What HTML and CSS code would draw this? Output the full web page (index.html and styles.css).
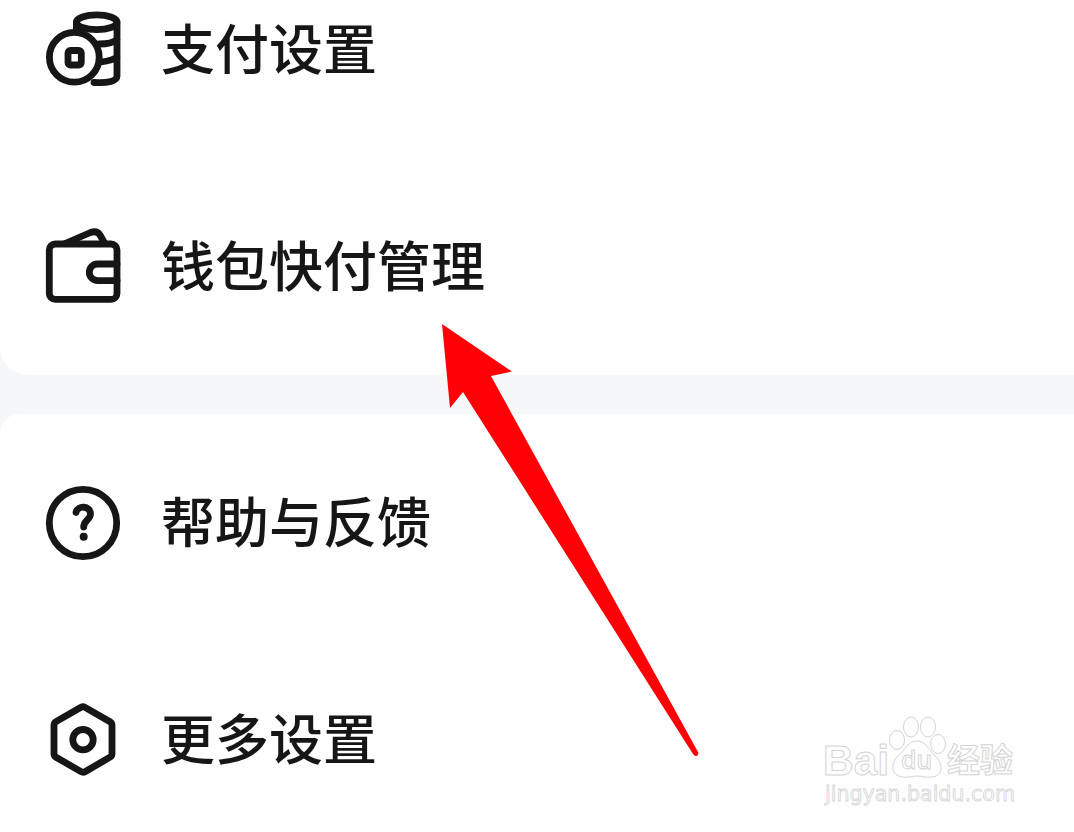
FILE: index.html
```
<!DOCTYPE html>
<html lang="zh-CN">
<head>
<meta charset="UTF-8">
<title>设置</title>
<link rel="stylesheet" href="styles.css">
</head>
<body>

<div class="card card-top">
  <div class="row">
    <svg class="icon" viewBox="0 0 77 77">
      <ellipse cx="51.7" cy="11.2" rx="20.3" ry="7.4"/>
      <path d="M31.4 12v9M72 12v53c0 5-9 7.500-23 6.500M72 28.500c-3 3-9 4.500-18 4.500M72 46c-3 2.500-8 4-16 5"/>
      <circle class="cover" cx="29.300" cy="46.300" r="24.900"/>
      <rect class="hole" x="23" y="39.500" width="13.300" height="14.500" rx="2.500"/>
    </svg>
    <span class="label">支付设置</span>
  </div>
  <div class="row">
    <svg class="icon" viewBox="0 0 77 77">
      <rect x="4.300" y="16" width="67.700" height="55.400" rx="6"/>
      <path d="M20 15.500L45.500 4.500q6.500-2.500 9.500 2.500l4.500 8M72 36H52.600a8.300 8.300 0 0 0 0 16.600H72"/>
    </svg>
    <span class="label">钱包快付管理</span>
  </div>
</div>

<div class="card card-bottom">
  <div class="row">
    <svg class="icon" viewBox="0 0 77 77">
      <circle cx="38" cy="39" r="33.700"/>
      <path d="M31 28.500c1.500-7.500 14.500-7 14.500 1.500 0 6-6.800 6-6.800 13"/>
      <circle class="dot" cx="38.700" cy="52.700" r="4"/>
    </svg>
    <span class="label">帮助与反馈</span>
  </div>
  <div class="row">
    <svg class="icon" viewBox="0 0 77 77">
      <path d="M36 6.300q2-1.200 4 0L65 20.700q2 1.200 2 3.500v28.500q0 2.300-2 3.500L40 70.700q-2 1.200-4 0L11 56.200q-2-1.200-2-3.500V24.200q0-2.300 2-3.500z"/>
      <circle cx="38" cy="38.700" r="10.200"/>
    </svg>
    <span class="label">更多设置</span>
  </div>
</div>

<svg class="arrow" viewBox="0 0 260 440">
  <path d="M2 4L72 51.500L51 56L258 432Q259 435 256.500 436Q254.500 436.500 253 434L23 72L10 88z"/>
</svg>

<svg class="watermark" viewBox="0 0 220 110">
  <text class="brand" x="13" y="70" textLength="66" lengthAdjust="spacingAndGlyphs">Bai</text>
  <ellipse cx="87" cy="35" rx="7.500" ry="9.500"/>
  <ellipse cx="101" cy="22" rx="7.500" ry="10"/>
  <ellipse cx="118" cy="22" rx="7.500" ry="10"/>
  <ellipse cx="128" cy="39" rx="7.500" ry="9.500"/>
  <path d="M107 36c9 0 11 8 18 15 9 8 8 20-3 21-6 1-10-1-15-1s-9 2-15 1c-11-2-12-13-4-21 8-7 10-15 19-15z"/>
  <text class="du" x="91" y="64" textLength="31" lengthAdjust="spacingAndGlyphs">du</text>
  <text class="exp" x="137" y="67">经验</text>
  <text class="url" x="15" y="96" textLength="190" lengthAdjust="spacingAndGlyphs">jingyan.baidu.com</text>
</svg>

</body>
</html>
```
FILE: styles.css
```
* {
  box-sizing: border-box;
  margin: 0;
  padding: 0;
}

body {
  height: 832px;
  overflow: hidden;
  position: relative;
  background-color: #f6f7f9;
  font-family: "Noto Sans CJK SC", sans-serif;
}

.card {
  overflow: hidden;
  background-color: #fefefe;
}

/* the list is scrolled, first row is partly out of view */
.card-top {
  margin-top: -59px;
  margin-bottom: 39px;
  border-radius: 0 0 0 28px;
}

.card-bottom {
  height: 418px;
  border-radius: 20px 0 0 0;
}

.row {
  display: flex;
  align-items: center;
  height: 217px;
  padding-left: 45px;
  gap: 39px;
}

.icon {
  width: 77px;
  height: 77px;
  fill: none;
  stroke: #161616;
  stroke-width: 6.8;
  stroke-linejoin: round;
}

.icon .cover {
  fill: #fefefe;
}

.icon path {
  stroke-linecap: round;
}

.icon .dot {
  fill: #161616;
  stroke: none;
}

.label {
  padding-bottom: 6px;
  font-size: 54px;
  font-weight: 500;
  line-height: 80px;
  color: #161616;
}

.arrow {
  position: absolute;
  left: 440px;
  top: 320px;
  width: 260px;
  height: 440px;
  fill: #ff0006;
}

.watermark {
  position: absolute;
  left: 810px;
  top: 705px;
  width: 220px;
  height: 110px;
  fill: #fefefe;
  stroke: #d4d4d4;
  stroke-width: 1;
}

.brand {
  font: bold 43px "Liberation Sans", sans-serif;
}

.du {
  font: 500 25px "Noto Sans", sans-serif;
}

.exp {
  font: bold 33px "Noto Sans CJK SC", sans-serif;
}

.url {
  font: 21px "DejaVu Sans", sans-serif;
  stroke-width: 0.8;
}
```
